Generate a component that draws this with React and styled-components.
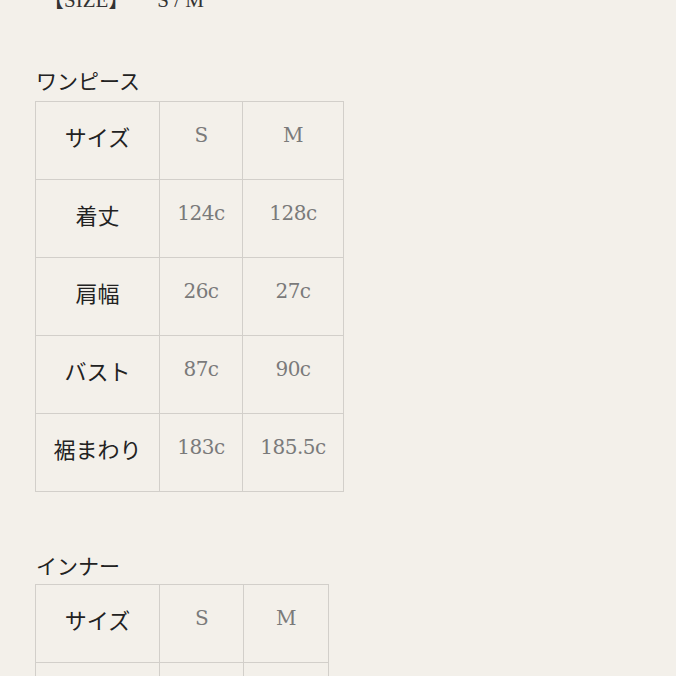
import React from 'react';
import styled, { createGlobalStyle } from 'styled-components';

const GlobalStyle = createGlobalStyle`
  html, body {
    margin: 0;
    padding: 0;
    background: #f3f0ea;
  }
`;

const Page = styled.div`
  width: 676px;
  height: 676px;
  overflow: hidden;
  padding-left: 35px;
  box-sizing: border-box;
  font-family: 'Noto Sans CJK JP', 'Noto Sans', sans-serif;
`;

const Intro = styled.div`
  margin-top: -11px;
  padding-left: 8px;
  font-family: 'Liberation Serif', 'Noto Sans CJK JP', serif;
  font-size: 21px;
  line-height: 22px;
  color: #333;
  display: flex;
  gap: 28px;
`;

const Heading = styled.div`
  margin-top: ${(p) => p.$top}px;
  font-size: 21px;
  line-height: 30px;
  color: #222;
  padding-left: 1px;
`;

const Table = styled.table`
  border-collapse: collapse;
  table-layout: fixed;
  margin-top: ${(p) => p.$top}px;
  background: #f3f0ea;
`;

const Cell = styled.td`
  border: 1px solid #d2cfca;
  text-align: center;
  vertical-align: middle;
`;

const Label = styled(Cell)`
  height: 67px;
  padding: 0 0 10px;
  font-family: 'Noto Sans CJK JP', sans-serif;
  font-size: 22px;
  color: #222;
`;

const Value = styled(Cell)`
  height: 65px;
  padding: 0 0 12px;
  font-family: 'DejaVu Serif', 'Liberation Serif', serif;
  font-weight: 200;
  font-size: 20px;
  color: #7a7a7a;
  letter-spacing: -0.5px;
`;

const SizeTable = ({ top, widths, rows }) => (
  <Table $top={top}>
    <colgroup>
      {widths.map((w, i) => (
        <col key={i} style={{ width: w }} />
      ))}
    </colgroup>
    <tbody>
      {rows.map(([label, s, m]) => (
        <tr key={label}>
          <Label>{label}</Label>
          <Value>{s}</Value>
          <Value>{m}</Value>
        </tr>
      ))}
    </tbody>
  </Table>
);

const onepiece = [
  ['サイズ', 'S', 'M'],
  ['着丈', '124c', '128c'],
  ['肩幅', '26c', '27c'],
  ['バスト', '87c', '90c'],
  ['裾まわり', '183c', '185.5c'],
];

const inner = [
  ['サイズ', 'S', 'M'],
  ['着丈', '', ''],
];

const App = () => (
  <>
    <GlobalStyle />
    <Page>
      <Intro>
        <span>【SIZE】</span>
        <span>S / M</span>
      </Intro>
      <Heading $top={54}>ワンピース</Heading>
      <SizeTable top={6} widths={[124, 83, 101]} rows={onepiece} />
      <Heading $top={58}>インナー</Heading>
      <SizeTable top={4} widths={[124, 84, 85]} rows={inner} />
    </Page>
  </>
);

export default App;
